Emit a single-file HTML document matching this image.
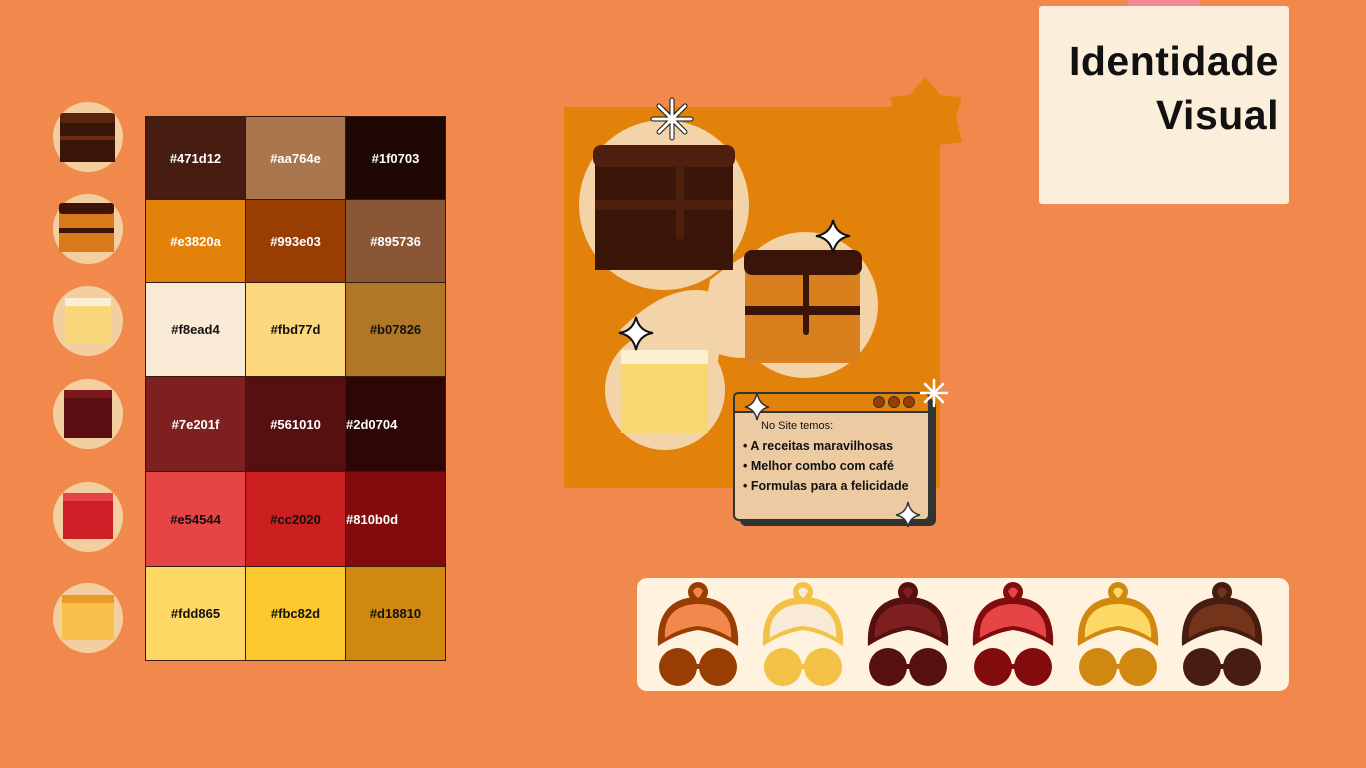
<!DOCTYPE html>
<html><head><meta charset="utf-8"><style>
*{margin:0;padding:0;box-sizing:border-box}
body{width:1366px;height:768px;background:#f0894b;position:relative;overflow:hidden;font-family:"Liberation Sans",sans-serif}
.abs{position:absolute}
table{position:absolute;left:145px;top:116px;border-collapse:collapse}
td{width:100px;border:1px solid #3a1a10;text-align:center;font-weight:bold;font-size:13px;font-family:"Liberation Sans",sans-serif}
.w{color:#fff}.b{color:#111}
.card{left:1039px;top:6px;width:250px;height:198px;background:#fbeedb;border-radius:3px;text-align:right;padding:28px 10px 0 0;font-weight:bold;font-size:41px;line-height:54px;color:#111;letter-spacing:0.5px}
</style></head><body>
<svg class="abs" style="left:0;top:0" width="140" height="700">
<g><circle cx="88" cy="137" r="35" fill="#f3cfa0"/><rect x="60" y="117" width="55" height="45" fill="#3a1508"/><rect x="60" y="113" width="55" height="10" rx="3" fill="#5a2410"/><rect x="60" y="136" width="55" height="4" fill="#6b2c12"/></g>
<g><circle cx="88" cy="229" r="35" fill="#f3cfa0"/><rect x="59" y="208" width="55" height="44" fill="#d87a1c"/><rect x="59" y="203" width="55" height="11" rx="3" fill="#3d1408"/><rect x="59" y="228" width="55" height="5" fill="#3d1408"/></g>
<g><circle cx="88" cy="321" r="35" fill="#f3cfa0"/><rect x="65" y="302" width="46" height="42" fill="#f7d779"/><rect x="65" y="298" width="46" height="8" fill="#fbf0d6"/></g>
<g><circle cx="88" cy="414" r="35" fill="#f3cfa0"/><rect x="64" y="394" width="48" height="44" fill="#5c0f12"/><rect x="64" y="390" width="48" height="8" fill="#7a1a1c"/></g>
<g><circle cx="88" cy="517" r="35" fill="#f3cfa0"/><rect x="63" y="497" width="50" height="42" fill="#cf2028"/><rect x="63" y="493" width="50" height="8" fill="#e5444a"/></g>
<g><circle cx="88" cy="618" r="35" fill="#f3cfa0"/><rect x="62" y="600" width="52" height="40" fill="#f6c04a"/><rect x="62" y="595" width="52" height="8" fill="#e89a2a"/></g>
</svg>
<table>
<tr style="height:83px"><td class="w" style="background:#471d12">#471d12</td><td class="w" style="background:#aa764e">#aa764e</td><td class="w" style="background:#1f0703">#1f0703</td></tr>
<tr style="height:83px"><td class="w" style="background:#e3820a">#e3820a</td><td class="w" style="background:#993e03">#993e03</td><td class="w" style="background:#895736">#895736</td></tr>
<tr style="height:94px"><td class="b" style="background:#f8ead4">#f8ead4</td><td class="b" style="background:#fbd77d">#fbd77d</td><td class="b" style="background:#b07826">#b07826</td></tr>
<tr style="height:95px"><td class="w" style="background:#7e201f">#7e201f</td><td class="w" style="background:#561010">#561010</td><td class="w" style="background:#2d0704;text-align:left">#2d0704</td></tr>
<tr style="height:95px"><td class="b" style="background:#e54544">#e54544</td><td class="b" style="background:#cc2020">#cc2020</td><td class="w" style="background:#810b0d;text-align:left">#810b0d</td></tr>
<tr style="height:94px"><td class="b" style="background:#fdd865">#fdd865</td><td class="b" style="background:#fbc82d">#fbc82d</td><td class="b" style="background:#d18810">#d18810</td></tr>
</table>
<svg class="abs" style="left:560px;top:70px" width="410" height="470">
<rect x="4" y="37" width="376" height="381" fill="#e3820a"/>
<polygon points="365,7 380,25 402,27 396,47 402,72 380,75 365,92 350,75 330,72 335,47 330,27 350,25" fill="#e3820a"/>
<circle cx="104" cy="135" r="85" fill="#f3d3a8"/>
<circle cx="245" cy="235" r="73" fill="#f3d3a8"/>
<circle cx="105" cy="320" r="60" fill="#f3d3a8"/>
<path d="M150,210 Q200,170 215,180 L240,280 Q160,300 140,270 Z" fill="#f3d3a8"/>
<path d="M60,260 Q120,200 170,230 L150,330 Z" fill="#f3d3a8"/>
<rect x="35" y="82" width="138" height="118" fill="#3a1608"/>
<rect x="33" y="75" width="142" height="22" rx="8" fill="#4e1f0c"/>
<rect x="35" y="130" width="138" height="10" fill="#4e1f0c"/>
<rect x="116" y="90" width="8" height="80" rx="4" fill="#4e1f0c"/>
<rect x="185" y="185" width="115" height="108" fill="#d8801e"/>
<rect x="184" y="180" width="118" height="25" rx="8" fill="#3a1408"/>
<rect x="185" y="236" width="115" height="9" fill="#3a1408"/>
<rect x="243" y="195" width="6" height="70" rx="3" fill="#3a1408"/>
<rect x="61" y="290" width="87" height="73" fill="#f8d76f"/>
<rect x="61" y="280" width="87" height="14" fill="#fbefd4"/>
<g stroke="#111" stroke-width="5" stroke-linecap="round"><path d="M112,30 V68 M93,49 H131 M99,36 L125,62 M125,36 L99,62"/></g>
<g stroke="#fff" stroke-width="3" stroke-linecap="round"><path d="M112,30 V68 M93,49 H131 M99,36 L125,62 M125,36 L99,62"/></g>
<path d="M273,150 Q276,164 290,166 Q276,168 273,183 Q270,168 256,166 Q270,164 273,150Z" fill="#fff" stroke="#111" stroke-width="2"/>
<path d="M76,247 Q79,261 93,263 Q79,265 76,280 Q73,265 59,263 Q73,261 76,247Z" fill="#fff" stroke="#111" stroke-width="2"/>
</svg>
<div class="abs" style="left:740px;top:399px;width:196px;height:127px;background:#333;border-radius:6px"></div>
<div class="abs" style="left:733px;top:392px;width:197px;height:22px;background:#e3820a;border:2px solid #333;border-radius:5px 5px 0 0"></div>
<div class="abs" style="left:873px;top:396px;width:12px;height:12px;border-radius:50%;background:#993e03;border:1px solid #333"></div>
<div class="abs" style="left:888px;top:396px;width:12px;height:12px;border-radius:50%;background:#993e03;border:1px solid #333"></div>
<div class="abs" style="left:903px;top:396px;width:12px;height:12px;border-radius:50%;background:#993e03;border:1px solid #333"></div>
<div class="abs" style="left:733px;top:411px;width:197px;height:110px;background:#eccba3;border:2px solid #333;border-radius:0 0 6px 6px;font-size:11px;color:#111;padding:7px 0 0 8px">
<div style="padding-left:18px;margin-bottom:4px">No Site temos:</div>
<div style="font-weight:bold;font-size:12.5px;line-height:20px">• A receitas maravilhosas<br>• Melhor combo com café<br>• Formulas para a felicidade</div>
</div>
<svg class="abs" style="left:740px;top:375px" width="215" height="160">
<path d="M17,17 Q19,30 29,32 Q19,34 17,45 Q15,34 5,32 Q15,30 17,17Z" fill="#fff" stroke="#333" stroke-width="1.5"/>
<path d="M168,127 Q170,138 180,140 Q170,142 168,152 Q166,142 156,140 Q166,138 168,127Z" fill="#fff" stroke="#333" stroke-width="1.5"/>
<g stroke="#fff" stroke-width="2.5" stroke-linecap="round"><path d="M194,5 V31 M181,18 H207 M185,9 L203,27 M203,9 L185,27"/></g>
</svg>
<div class="abs" style="left:1128px;top:0;width:72px;height:16px;background:#f08aa0;opacity:.9"></div>
<div class="abs card">Identidade<br>Visual</div>
<div class="abs" style="left:637px;top:578px;width:652px;height:113px;background:#fff3df;border-radius:10px"></div>
<svg class="abs" style="left:637px;top:578px" width="652" height="113">
<defs>
<g id="ic">
<circle cx="0" cy="14" r="10" fill="var(--d)"/>
<path d="M-40,68 C-42,35 -26,19 0,19 C26,19 42,35 40,68 Q20,55 0,52 Q-20,55 -40,68Z" fill="var(--d)"/>
<path d="M-33,60 C-35,37 -20,26 0,26 C20,26 35,37 33,60 Q18,50 0,48 Q-18,50 -33,60Z" fill="var(--l)"/>
<path d="M-5,13 Q0,6 5,13 Q3,18 0,20 Q-3,18 -5,13Z" fill="var(--l)"/>
<ellipse cx="-20" cy="89" rx="19" ry="19" fill="var(--g)"/>
<ellipse cx="20" cy="89" rx="19" ry="19" fill="var(--g)"/>
<rect x="-4" y="86" width="8" height="5" fill="var(--g)"/>
</g></defs>
<use href="#ic" x="61" style="--d:#993e03;--l:#f0894b;--g:#993e03"/>
<use href="#ic" x="166" style="--d:#f3c146;--l:#f8ead4;--g:#f3c146"/>
<use href="#ic" x="271" style="--d:#561010;--l:#7e201f;--g:#561010"/>
<use href="#ic" x="376" style="--d:#810b0d;--l:#e54544;--g:#810b0d"/>
<use href="#ic" x="481" style="--d:#d18810;--l:#fdd865;--g:#d18810"/>
<use href="#ic" x="585" style="--d:#471d12;--l:#73341a;--g:#471d12"/>
</svg>
</body></html>
